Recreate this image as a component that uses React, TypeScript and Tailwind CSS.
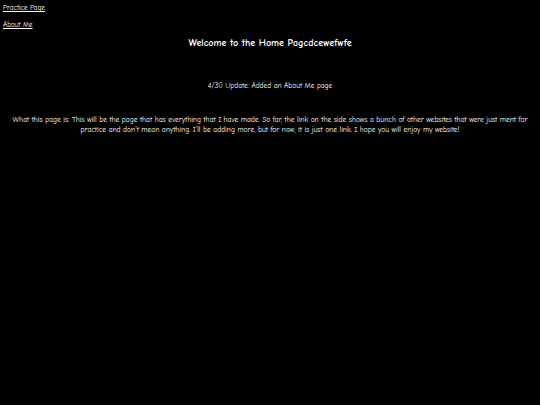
import React from 'react';

const App: React.FC = () => {
  return (
    <div
      className="min-h-screen w-full bg-black text-white px-[3px] pt-[3px]"
      style={{ fontFamily: '"Comic Sans MS", "Comic Neue", "Noto Sans", sans-serif' }}
    >
      <nav className="flex flex-col items-start gap-[7px] text-[7.2px] leading-[10px]">
        <a href="#" className="underline">Practice Page</a>
        <a href="#" className="underline">About Me</a>
      </nav>
      <h1 className="mt-[6px] text-center text-[10px] leading-[14px] font-bold">
        Welcome to the Home Pagcdcewefwfe
      </h1>
      <p className="mt-[31px] text-center text-[7.4px] leading-[10px]">
        4/30 Update: Added an About Me page
      </p>
      <p className="mt-[24px] text-center text-[7.5px] leading-[10px]">
        What this page is: This will be the page that has everything that I have made. So far, the link on the side shows a bunch of other websites that were just ment for practice and don't mean anything. I'll be adding more, but for now, it is just one link. I hope you will enjoy my website!
      </p>
    </div>
  );
};

export default App;
